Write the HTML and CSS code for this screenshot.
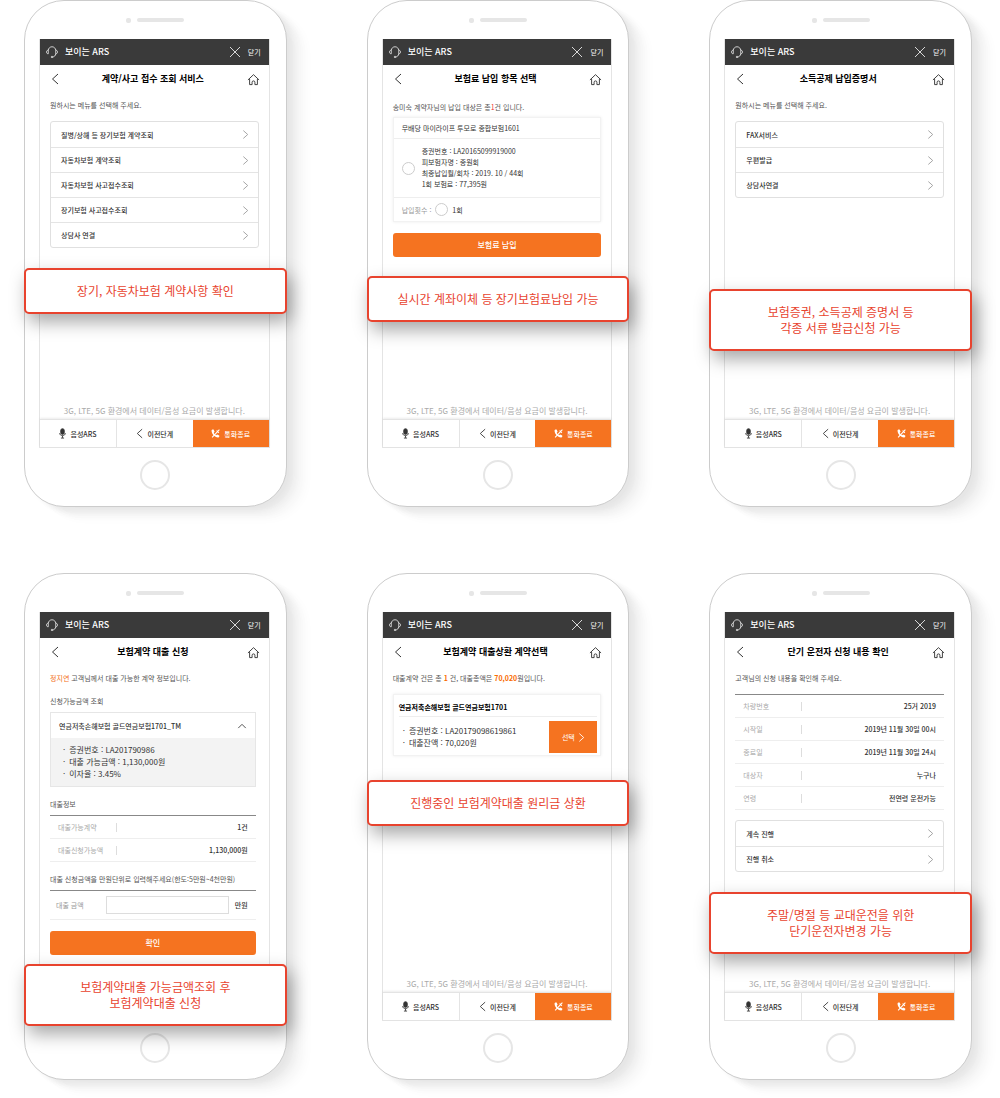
FILE: index.html
```html
<!DOCTYPE html>
<html lang="ko">
<head>
    <meta charset="UTF-8">
    <meta name="viewport" content="width=device-width, initial-scale=1.0">
    <title>보이는 ARS</title>
    <link rel="stylesheet" href="styles.css">
</head>
<body>
    <!-- 공통 아이콘 -->
    <svg class="icon-defs" aria-hidden="true">
        <symbol id="i-headset" viewBox="0 0 24 24">
            <path d="M4.500 8.500C5 4.500 8 1.500 12 1.500s7 3 7.500 7M19.500 15.500c-.6 4-3 6-6 6.500"/>
            <path d="M4.500 8.500C2 8.500 1 10 1 12s1 3.500 3.500 3.500zM19.500 8.500C22 8.500 23 10 23 12s-1 3.500-3.500 3.500z"/>
            <circle cx="12" cy="22" r="1.500"/>
        </symbol>
        <symbol id="i-close" viewBox="0 0 12 12"><path d="M1 1l10 10M11 1L1 11"/></symbol>
        <symbol id="i-left" viewBox="0 0 8 12"><path d="M7 1L1.500 6 7 11"/></symbol>
        <symbol id="i-right" viewBox="0 0 8 12"><path d="M1.500 1.500L6.500 6l-5 4.500"/></symbol>
        <symbol id="i-up" viewBox="0 0 12 8"><path d="M1.500 6.500L6 2l4.500 4.500"/></symbol>
        <symbol id="i-home" viewBox="0 0 14 14"><path d="M1 7.500L7 1.800l6 5.700M2.800 6.500v6h2.700V10a1.500 1.500 0 0 1 3 0v2.500h2.700v-6"/></symbol>
        <symbol id="i-mic" viewBox="0 0 8 12">
            <rect x="2" y="0.500" width="4" height="6.500" rx="2" fill="currentColor"/>
            <path d="M.8 5.500c0 4 6.400 4 6.400 0M4 8.500V11M2.200 11.200h3.600"/>
        </symbol>
        <symbol id="i-hangup" viewBox="0 0 12 12">
            <path fill="currentColor" stroke="none" d="M1.800.8h1.700l1.300 2.700-1.200 1.400c.6 1.500 1.700 2.700 3.200 3.500l1.400-1.100 2.800 1.500v1.500c-.2.800-.9 1.200-1.700 1.100C4.800 10.800 1 7 .700 2.400.7 1.600 1.100 1 1.800.8z"/>
            <path d="M11.200.8L1.500 11.200M7.500 2l3 3.200"/>
        </symbol>
    </svg>

    <main class="phones">

        <!-- 계약/사고 조회 -->
        <section class="phone">
            <div class="speaker"><i></i><b></b></div>
            <div class="screen">
                <header class="topbar">
                    <svg class="icon headset"><use href="#i-headset"/></svg>
                    <strong>보이는 ARS</strong>
                    <button type="button" class="close"><svg class="icon x"><use href="#i-close"/></svg>닫기</button>
                </header>
                <div class="titlebar">
                    <a href="#" aria-label="이전"><svg class="icon back"><use href="#i-left"/></svg></a>
                    <h2>계약/사고 접수 조회 서비스</h2>
                    <a href="#" aria-label="홈"><svg class="icon home"><use href="#i-home"/></svg></a>
                </div>
                <div class="content">
                    <p class="intro">원하시는 메뉴를 선택해 주세요.</p>
                    <nav class="menu">
                        <a href="#">질병/상해 등 장기보험 계약조회<svg class="icon arrow"><use href="#i-right"/></svg></a>
                        <a href="#">자동차보험 계약조회<svg class="icon arrow"><use href="#i-right"/></svg></a>
                        <a href="#">자동차보험 사고접수조회<svg class="icon arrow"><use href="#i-right"/></svg></a>
                        <a href="#">장기보험 사고접수조회<svg class="icon arrow"><use href="#i-right"/></svg></a>
                        <a href="#">상담사 연결<svg class="icon arrow"><use href="#i-right"/></svg></a>
                    </nav>
                </div>
                <p class="notice">3G, LTE, 5G 환경에서 데이터/음성 요금이 발생합니다.</p>
                <div class="bottombar">
                    <button type="button"><svg class="icon mic"><use href="#i-mic"/></svg>음성ARS</button>
                    <button type="button"><svg class="icon prev"><use href="#i-left"/></svg>이전단계</button>
                    <button type="button" class="end"><svg class="icon hangup"><use href="#i-hangup"/></svg>통화종료</button>
                </div>
            </div>
            <div class="home-button"></div>
            <p class="callout callout-inquiry">장기, 자동차보험 계약사항 확인</p>
        </section>

        <!-- 보험료 납입 -->
        <section class="phone">
            <div class="speaker"><i></i><b></b></div>
            <div class="screen">
                <header class="topbar">
                    <svg class="icon headset"><use href="#i-headset"/></svg>
                    <strong>보이는 ARS</strong>
                    <button type="button" class="close"><svg class="icon x"><use href="#i-close"/></svg>닫기</button>
                </header>
                <div class="titlebar">
                    <a href="#" aria-label="이전"><svg class="icon back"><use href="#i-left"/></svg></a>
                    <h2>보험료 납입 항목 선택</h2>
                    <a href="#" aria-label="홈"><svg class="icon home"><use href="#i-home"/></svg></a>
                </div>
                <div class="content">
                    <p class="intro payment-intro">송미숙 계약자님의 납입 대상은 총<em class="red">1</em>건 입니다.</p>
                    <div class="card">
                        <h3>무배당 마이라이프 투모로 종합보험1601</h3>
                        <label class="contract">
                            <input type="radio" name="contract">
                            <span>증권번호 : LA20165099919000<br>피보험자명 : 종원회<br>최종납입월/회차 : 2019. 10 / 44회<br>1회 보험료 : 77,395원</span>
                        </label>
                        <div class="times">
                            <span>납입횟수 :</span>
                            <label><input type="radio" name="times">1회</label>
                        </div>
                    </div>
                    <button type="button" class="submit">보험료 납입</button>
                </div>
                <p class="notice">3G, LTE, 5G 환경에서 데이터/음성 요금이 발생합니다.</p>
                <div class="bottombar">
                    <button type="button"><svg class="icon mic"><use href="#i-mic"/></svg>음성ARS</button>
                    <button type="button"><svg class="icon prev"><use href="#i-left"/></svg>이전단계</button>
                    <button type="button" class="end"><svg class="icon hangup"><use href="#i-hangup"/></svg>통화종료</button>
                </div>
            </div>
            <div class="home-button"></div>
            <p class="callout callout-payment">실시간 계좌이체 등 장기보험료납입 가능</p>
        </section>

        <!-- 증명서 발급 -->
        <section class="phone">
            <div class="speaker"><i></i><b></b></div>
            <div class="screen">
                <header class="topbar">
                    <svg class="icon headset"><use href="#i-headset"/></svg>
                    <strong>보이는 ARS</strong>
                    <button type="button" class="close"><svg class="icon x"><use href="#i-close"/></svg>닫기</button>
                </header>
                <div class="titlebar">
                    <a href="#" aria-label="이전"><svg class="icon back"><use href="#i-left"/></svg></a>
                    <h2>소득공제 납입증명서</h2>
                    <a href="#" aria-label="홈"><svg class="icon home"><use href="#i-home"/></svg></a>
                </div>
                <div class="content">
                    <p class="intro">원하시는 메뉴를 선택해 주세요.</p>
                    <nav class="menu">
                        <a href="#">FAX서비스<svg class="icon arrow"><use href="#i-right"/></svg></a>
                        <a href="#">우편발급<svg class="icon arrow"><use href="#i-right"/></svg></a>
                        <a href="#">상담사연결<svg class="icon arrow"><use href="#i-right"/></svg></a>
                    </nav>
                </div>
                <p class="notice">3G, LTE, 5G 환경에서 데이터/음성 요금이 발생합니다.</p>
                <div class="bottombar">
                    <button type="button"><svg class="icon mic"><use href="#i-mic"/></svg>음성ARS</button>
                    <button type="button"><svg class="icon prev"><use href="#i-left"/></svg>이전단계</button>
                    <button type="button" class="end"><svg class="icon hangup"><use href="#i-hangup"/></svg>통화종료</button>
                </div>
            </div>
            <div class="home-button"></div>
            <p class="callout callout-document">보험증권, 소득공제 증명서 등<br>각종 서류 발급신청 가능</p>
        </section>

        <!-- 보험계약 대출 신청 -->
        <section class="phone">
            <div class="speaker"><i></i><b></b></div>
            <div class="screen">
                <header class="topbar">
                    <svg class="icon headset"><use href="#i-headset"/></svg>
                    <strong>보이는 ARS</strong>
                    <button type="button" class="close"><svg class="icon x"><use href="#i-close"/></svg>닫기</button>
                </header>
                <div class="titlebar">
                    <a href="#" aria-label="이전"><svg class="icon back"><use href="#i-left"/></svg></a>
                    <h2>보험계약 대출 신청</h2>
                    <a href="#" aria-label="홈"><svg class="icon home"><use href="#i-home"/></svg></a>
                </div>
                <div class="content loan">
                    <p class="intro"><em class="orange">정지연</em> 고객님께서 대출 가능한 계약 정보입니다.</p>
                    <h3 class="subtitle">신청가능금액 조회</h3>
                    <div class="accordion">
                        <button type="button">연금저축손해보험 골드연금보험1701_TM<svg class="icon up"><use href="#i-up"/></svg></button>
                        <ul class="dots">
                            <li>증권번호 : LA201790986</li>
                            <li>대출 가능금액 : 1,130,000원</li>
                            <li>이자율 : 3.45%</li>
                        </ul>
                    </div>
                    <h3 class="subtitle">대출정보</h3>
                    <table class="info">
                        <tr><th scope="row">대출가능계약</th><td>1건</td></tr>
                        <tr><th scope="row">대출신청가능액</th><td>1,130,000원</td></tr>
                    </table>
                    <h3 class="subtitle">대출 신청금액을 만원단위로 입력해주세요(한도:5만원~4천만원)</h3>
                    <div class="amount">
                        <label for="amount">대출 금액</label>
                        <input type="text" id="amount">
                        <span>만원</span>
                    </div>
                    <button type="button" class="submit">확인</button>
                </div>
            </div>
            <div class="home-button"></div>
            <p class="callout callout-loan">보험계약대출 가능금액조회 후<br>보험계약대출 신청</p>
        </section>

        <!-- 대출 상환 -->
        <section class="phone">
            <div class="speaker"><i></i><b></b></div>
            <div class="screen">
                <header class="topbar">
                    <svg class="icon headset"><use href="#i-headset"/></svg>
                    <strong>보이는 ARS</strong>
                    <button type="button" class="close"><svg class="icon x"><use href="#i-close"/></svg>닫기</button>
                </header>
                <div class="titlebar">
                    <a href="#" aria-label="이전"><svg class="icon back"><use href="#i-left"/></svg></a>
                    <h2>보험계약 대출상환 계약선택</h2>
                    <a href="#" aria-label="홈"><svg class="icon home"><use href="#i-home"/></svg></a>
                </div>
                <div class="content">
                    <p class="intro">대출계약 건은 총 <strong>1</strong> 건, 대출총액은 <strong>70,020</strong>원입니다.</p>
                    <div class="card repay">
                        <h3>연금저축손해보험 골드연금보험1701</h3>
                        <div class="repay-row">
                            <ul class="dots">
                                <li>증권번호 : LA20179098619861</li>
                                <li>대출잔액 : 70,020원</li>
                            </ul>
                            <button type="button">선택<svg class="icon arrow"><use href="#i-right"/></svg></button>
                        </div>
                    </div>
                </div>
                <p class="notice">3G, LTE, 5G 환경에서 데이터/음성 요금이 발생합니다.</p>
                <div class="bottombar">
                    <button type="button"><svg class="icon mic"><use href="#i-mic"/></svg>음성ARS</button>
                    <button type="button"><svg class="icon prev"><use href="#i-left"/></svg>이전단계</button>
                    <button type="button" class="end"><svg class="icon hangup"><use href="#i-hangup"/></svg>통화종료</button>
                </div>
            </div>
            <div class="home-button"></div>
            <p class="callout callout-repay">진행중인 보험계약대출 원리금 상환</p>
        </section>

        <!-- 단기 운전자 변경 -->
        <section class="phone">
            <div class="speaker"><i></i><b></b></div>
            <div class="screen">
                <header class="topbar">
                    <svg class="icon headset"><use href="#i-headset"/></svg>
                    <strong>보이는 ARS</strong>
                    <button type="button" class="close"><svg class="icon x"><use href="#i-close"/></svg>닫기</button>
                </header>
                <div class="titlebar">
                    <a href="#" aria-label="이전"><svg class="icon back"><use href="#i-left"/></svg></a>
                    <h2>단기 운전자 신청 내용 확인</h2>
                    <a href="#" aria-label="홈"><svg class="icon home"><use href="#i-home"/></svg></a>
                </div>
                <div class="content">
                    <p class="intro">고객님의 신청 내용을 확인해 주세요.</p>
                    <table class="info driver">
                        <tr><th scope="row">차량번호</th><td>25거 2019</td></tr>
                        <tr><th scope="row">시작일</th><td>2019년 11월 30일 00시</td></tr>
                        <tr><th scope="row">종료일</th><td>2019년 11월 30일 24시</td></tr>
                        <tr><th scope="row">대상자</th><td>누구나</td></tr>
                        <tr><th scope="row">연령</th><td>전연령 운전가능</td></tr>
                    </table>
                    <nav class="menu">
                        <a href="#">계속 진행<svg class="icon arrow"><use href="#i-right"/></svg></a>
                        <a href="#">진행 취소<svg class="icon arrow"><use href="#i-right"/></svg></a>
                    </nav>
                </div>
                <p class="notice">3G, LTE, 5G 환경에서 데이터/음성 요금이 발생합니다.</p>
                <div class="bottombar">
                    <button type="button"><svg class="icon mic"><use href="#i-mic"/></svg>음성ARS</button>
                    <button type="button"><svg class="icon prev"><use href="#i-left"/></svg>이전단계</button>
                    <button type="button" class="end"><svg class="icon hangup"><use href="#i-hangup"/></svg>통화종료</button>
                </div>
            </div>
            <div class="home-button"></div>
            <p class="callout callout-driver">주말/명절 등 교대운전을 위한<br>단기운전자변경 가능</p>
        </section>

    </main>
</body>
</html>
```
FILE: styles.css
```css
* {
    box-sizing: border-box;
}

body {
    margin: 0;
    background: #fff;
    color: #333;
    font-family: "Noto Sans CJK KR", sans-serif;
    font-size: 7px;
    line-height: 12px;
}

h2, h3, p, ul {
    margin: 0;
    padding: 0;
}

em {
    font-style: normal;
}

a {
    color: inherit;
    text-decoration: none;
}

button {
    padding: 0;
    border: 0;
    background: none;
    color: inherit;
    font: inherit;
    cursor: pointer;
}

/* 아이콘 */
.icon-defs {
    display: none;
}

.icon {
    display: block;
    flex: none;
    fill: none;
    stroke: currentColor;
    stroke-width: 1;
}

.headset {
    width: 12px;
    height: 12px;
    stroke-width: 1.5;
}

.x {
    width: 12px;
    height: 12px;
    stroke-width: 0.8;
}

.back {
    width: 8px;
    height: 12px;
}

.home {
    width: 13px;
    height: 13px;
}

.arrow {
    width: 7px;
    height: 11px;
    color: #999;
}

.up {
    width: 10px;
    height: 8px;
}

.mic,
.prev {
    width: 7px;
    height: 11px;
}

.hangup {
    width: 9px;
    height: 9px;
    stroke-width: 1.4;
}

/* 휴대폰 배치 */
.phones {
    display: grid;
    grid-template-columns: repeat(3, minmax(0, 1fr));
    gap: 66px 80px;
    padding: 0 28px 19px 24px;
}

.phone {
    position: relative;
    display: flex;
    flex-direction: column;
    padding: 0 14px 16px;
    border: 1px solid #ccc;
    border-radius: 40px;
    background: #fff;
    box-shadow: 5px 4px 5px rgba(0, 0, 0, 0.03), 10px 7px 6px rgba(0, 0, 0, 0.03), 15px 10px 7px rgba(0, 0, 0, 0.02), 20px 13px 8px rgba(0, 0, 0, 0.02);
}

.speaker {
    display: flex;
    justify-content: center;
    align-items: center;
    gap: 6px;
    height: 38px;
}

.speaker i {
    width: 5px;
    height: 5px;
    border-radius: 2px;
    background: #e6e6e6;
}

.speaker b {
    width: 47px;
    height: 4px;
    border-radius: 2px;
    background: #e6e6e6;
}

.screen {
    display: flex;
    flex-direction: column;
    min-height: 409px;
    margin-right: 2px;
    border: 1px solid #e4e4e4;
    border-top: 0;
}

.home-button {
    align-self: center;
    width: 30px;
    height: 30px;
    margin-top: 12px;
    border: 2px solid #e6e6e6;
    border-radius: 50%;
}

/* 상단 */
.topbar {
    display: flex;
    align-items: center;
    gap: 7px;
    height: 26px;
    padding: 0 8px 0 6px;
    background: #3a3a3a;
    color: #fff;
}

.topbar strong {
    font-size: 9px;
    font-weight: 500;
}

.close {
    display: flex;
    align-items: center;
    gap: 7px;
    margin-left: auto;
}

.titlebar {
    display: flex;
    justify-content: space-between;
    align-items: center;
    height: 28px;
    padding: 0 9px 0 11px;
}

.titlebar h2 {
    color: #000;
    font-size: 9px;
    font-weight: 700;
}

.content {
    flex: 1;
    padding: 6px 10px 0;
}

.loan {
    padding-right: 13px;
}

.intro {
    color: #555;
}

.payment-intro {
    padding-top: 2px;
}

.intro .red {
    color: #f03030;
}

.intro .orange {
    color: #f37021;
}

.intro strong {
    color: #f96a00;
    font-weight: 700;
}

/* 메뉴 목록 */
.menu {
    margin-top: 10px;
    border: 1px solid #e0e0e0;
    border-radius: 3px;
}

.menu a {
    display: flex;
    justify-content: space-between;
    align-items: center;
    height: 25px;
    padding: 0 9px 0 10px;
    font-weight: 500;
}

.menu a + a {
    border-top: 1px solid #e4e4e4;
}

/* 납입 카드 */
.card {
    margin-top: 4px;
    border: 1px solid #f2f2f2;
    box-shadow: 0 0 3px rgba(0, 0, 0, 0.08);
}

.card h3 {
    padding: 4px 8px;
    border-bottom: 1px solid #eee;
    font-size: 7px;
    font-weight: 400;
}

.contract {
    display: flex;
    align-items: center;
    gap: 7px;
    padding: 7px 8px;
    border-bottom: 1px solid #eee;
    line-height: 11px;
}

input[type="radio"] {
    flex: none;
    width: 13px;
    height: 13px;
    margin: 0;
    border: 1px solid #ccc;
    border-radius: 50%;
    background: #fff;
    appearance: none;
}

.times,
.times label {
    display: flex;
    align-items: center;
    gap: 4px;
}

.times {
    height: 23px;
    padding: 0 8px;
}

.times span {
    color: #999;
}

.submit {
    display: block;
    width: 100%;
    height: 24px;
    margin-top: 11px;
    border-radius: 3px;
    background: #f57320;
    color: #fff;
    font-size: 8px;
    font-weight: 500;
}

/* 대출 신청 */
.subtitle {
    margin: 11px 0 5px;
    color: #555;
    font-size: 7px;
    font-weight: 400;
}

.accordion {
    border: 1px solid #e6e6e6;
}

.accordion button {
    display: flex;
    justify-content: space-between;
    align-items: center;
    width: 100%;
    height: 25px;
    padding: 0 8px;
    font-weight: 500;
}

.dots {
    font-size: 8px;
    list-style: none;
}

.dots li::before {
    content: "·";
    margin: 0 4px;
}

.accordion .dots {
    padding: 6px 8px;
    background: #f3f3f3;
}

.info {
    width: 100%;
    border-collapse: collapse;
    border-top: 1px solid #888;
}

.info th,
.info td {
    height: 23px;
    padding: 0 8px;
    border-bottom: 1px solid #eee;
}

.info th {
    width: 67px;
    padding-right: 0;
    background: linear-gradient(#ddd, #ddd) right center / 1px 9px no-repeat;
    color: #aaa;
    font-weight: 400;
    text-align: left;
}

.info td {
    font-weight: 500;
    text-align: right;
}

.driver {
    margin-top: 10px;
}

.amount {
    display: flex;
    align-items: center;
    height: 30px;
    padding: 0 8px 0 6px;
    border-top: 1px solid #888;
    border-bottom: 1px solid #eee;
}

.amount label {
    width: 50px;
    color: #999;
}

.amount input {
    flex: 1;
    min-width: 0;
    height: 18px;
    margin-right: 6px;
    padding: 0 4px;
    border: 1px solid #ddd;
    font: inherit;
}

.amount span {
    font-weight: 500;
}

/* 대출 상환 */
.repay {
    margin-top: 10px;
    padding: 3px 3px 2px 5px;
}

.repay h3 {
    padding: 3px 0;
    color: #000;
    font-weight: 700;
}

.repay-row {
    display: flex;
    justify-content: space-between;
    align-items: center;
    padding-top: 4px;
}

.repay-row button {
    display: flex;
    justify-content: center;
    align-items: center;
    gap: 3px;
    width: 48px;
    height: 32px;
    background: #f57320;
    color: #fff;
}

.repay-row .arrow {
    color: #fff;
}

/* 하단 */
.notice {
    padding-bottom: 2px;
    color: #aaa;
    font-size: 8px;
    text-align: center;
}

.bottombar {
    display: flex;
    height: 28px;
    border-top: 1px solid #e4e4e4;
    box-shadow: 0 -1px 2px rgba(0, 0, 0, 0.08);
}

.bottombar button {
    display: flex;
    flex: 1;
    justify-content: center;
    align-items: center;
    gap: 4px;
    font-weight: 500;
}

.bottombar button + button {
    border-left: 1px solid #e4e4e4;
}

.bottombar .end {
    border-left: 0;
    background: #f57320;
    color: #fff;
}

/* 빨간 설명 상자 */
.callout {
    position: absolute;
    right: -1px;
    left: -1px;
    padding: 13px 8px;
    border: 2px solid #e8432e;
    border-radius: 5px;
    background: #fff;
    box-shadow: 4px 8px 18px rgba(0, 0, 0, 0.35);
    color: #e8432e;
    font-size: 12px;
    line-height: 16px;
    text-align: center;
}

.callout-inquiry {
    top: 267px;
}

.callout-payment {
    top: 275px;
}

.callout-document {
    top: 288px;
}

.callout-loan {
    top: 390px;
}

.callout-repay {
    top: 206px;
}

.callout-driver {
    top: 318px;
}
```
